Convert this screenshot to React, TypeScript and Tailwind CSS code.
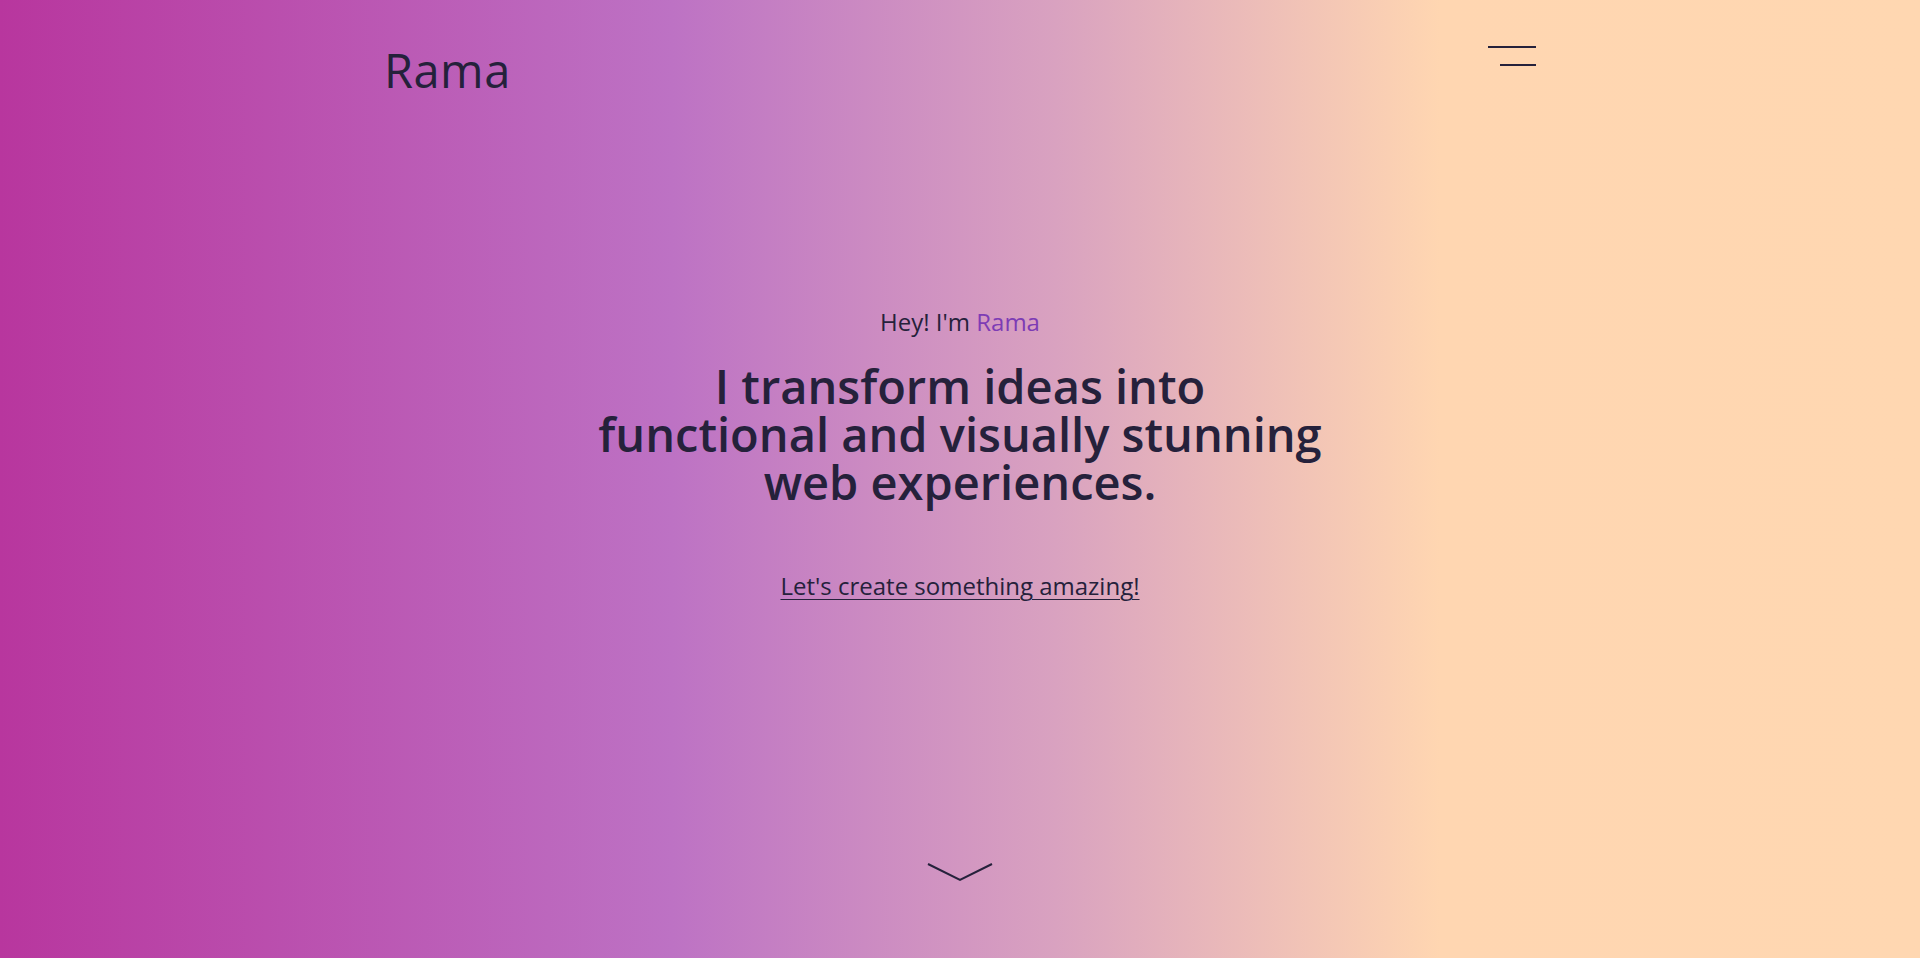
import React from "react";

const font = { fontFamily: '"Open Sans", "Liberation Sans", sans-serif' };

function MenuButton() {
  return (
    <button
      type="button"
      aria-label="Open menu"
      className="flex w-12 flex-col items-end gap-4 pt-[4px]"
    >
      <span className="block h-[2px] w-12 bg-[#25213b]" />
      <span className="block h-[2px] w-9 bg-[#25213b]" />
    </button>
  );
}

function ScrollHint() {
  return (
    <a href="#about" aria-label="Scroll down" className="flex justify-center">
      <svg width="66" height="19" viewBox="0 0 66 19" fill="none">
        <path
          d="M1 1 L33 17 L65 1"
          stroke="#25213b"
          strokeWidth="2"
          strokeLinejoin="miter"
        />
      </svg>
    </a>
  );
}

export default function App() {
  return (
    <div
      style={font}
      className="flex h-screen w-full flex-col overflow-hidden bg-[linear-gradient(90deg,#b8369e_0%,#bd72c4_35%,#d9a2c0_55%,#ffd6b1_75%,#ffd7b1_100%)] text-[#25213b]"
    >
      <header className="mx-auto flex w-[1152px] items-start justify-between pt-[42px]">
        <a href="/" className="text-[47px] leading-[1.2] tracking-[0.5px]">
          Rama
        </a>
        <MenuButton />
      </header>

      <main className="flex flex-col items-center pt-[208px] text-center">
        <p className="text-[24px] leading-[1.3]">
          Hey! I&apos;m <span className="text-[#7d3cb5]">Rama</span>
        </p>
        <h1 className="mt-[24px] text-[47px] font-semibold leading-[48px]">
          I transform ideas into
          <br />
          functional and visually stunning
          <br />
          web experiences.
        </h1>
        <a
          href="#contact"
          className="mt-[64px] text-[24px] leading-[1.3] underline decoration-1 underline-offset-[4px]"
        >
          Let&apos;s create something amazing!
        </a>
      </main>

      <div className="mt-auto pb-[76px]">
        <ScrollHint />
      </div>
    </div>
  );
}
